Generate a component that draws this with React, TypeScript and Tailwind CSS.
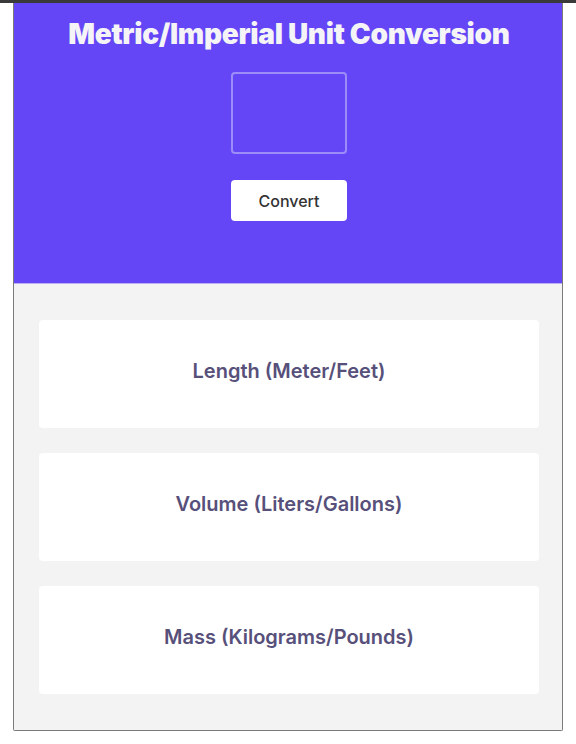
import React, { useState } from "react";

const Units = [
  "Length (Meter/Feet)",
  "Volume (Liters/Gallons)",
  "Mass (Kilograms/Pounds)",
];

const App: React.FC = () => {
  const [value, setValue] = useState("");

  return (
    <div className="min-h-screen bg-white" style={{ fontFamily: "Inter, 'Noto Sans', sans-serif" }}>
      <div className="h-[3px] bg-[#3a3a3a]" />
      <div className="ml-[13px] mr-[13px] border-x border-b border-[#7a7a7a] rounded-b-[2px] overflow-hidden">
        <div className="bg-[#6446f6] h-[281px] pl-[2px] flex flex-col items-center border-b border-[#b9b0f4]">
          <h1 className="mt-[14px] text-[28px] leading-[34px] font-black text-[#f4f4f6] tracking-[-0.3px]">
            Metric/Imperial Unit Conversion
          </h1>
          <input
            type="text"
            value={value}
            onChange={(e) => setValue(e.target.value)}
            className="mt-[21px] w-[116px] h-[82px] rounded-[4px] border-2 border-[#9c8cf8] bg-transparent text-white text-center outline-none"
          />
          <button className="mt-[26px] w-[116px] h-[41px] rounded-[4px] bg-white text-[16px] font-medium text-[#333333]">
            Convert
          </button>
        </div>
        <div className="bg-[#f3f3f3] pl-[25px] pr-[23px] py-[36px] flex flex-col gap-[25px]">
          {Units.map((u) => (
            <div
              key={u}
              className="h-[108px] pb-[6px] bg-white rounded-[4px] flex items-center justify-center"
            >
              <span className="text-[20px] font-semibold text-[#57507a]">{u}</span>
            </div>
          ))}
        </div>
      </div>
    </div>
  );
};

export default App;
